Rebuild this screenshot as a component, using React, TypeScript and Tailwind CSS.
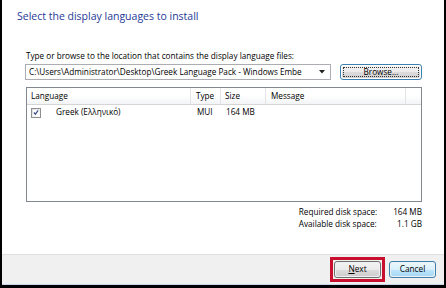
import React from "react";

function Win7Button({ children, blue }: { children: React.ReactNode; blue?: boolean }) {
  return (
    <div
      className={
        "w-[47px] h-[17px] rounded-[3px] border p-px " +
        (blue ? "border-[#3c7fb1]" : "border-[#707070]")
      }
    >
      <div
        className={
          "h-full w-full rounded-[2px] flex items-center justify-center text-[8.3px] leading-none text-black " +
          (blue
            ? "bg-[linear-gradient(to_bottom,#eaf6fd_0%,#d9f0fc_50%,#bee6fd_50%,#a7d9f5_100%)]"
            : "bg-[linear-gradient(to_bottom,#f2f2f2_0%,#ebebeb_50%,#dddddd_50%,#cfcfcf_100%)]")
        }
      >
        {children}
      </div>
    </div>
  );
}

export default function App() {
  return (
    <div className="w-[446px] h-[288px] flex flex-col bg-white border-l-2 border-r-2 border-black font-['Open_Sans','Noto_Sans',sans-serif] text-black overflow-hidden">
      <div className="flex-1 flex flex-col">
        <div className="pt-[9px] pl-[15px] h-[24px] text-[10.5px] leading-[15px] text-[#1e3a96]">
          Select the display languages to install
        </div>
        <div className="pl-[23px] pr-[22px] flex flex-col">
          <div className="mt-[26px] ml-px h-[12px] text-[8.2px] leading-[12px]">
            Type or browse to the location that contains the display language files:
          </div>
          <div className="mt-[2px] flex gap-[9px] h-[16px]">
            <div className="w-[306px] h-full border border-[#abadb3] bg-white flex items-center pl-[3px] pr-[5px]">
              <span className="flex-1 text-[8.2px] leading-none whitespace-nowrap">
                C:\Users\Administrator\Desktop\Greek Language Pack - Windows Embe
              </span>
              <svg width="6" height="4" viewBox="0 0 6 4" className="ml-[4px] shrink-0">
                <path d="M0 0 H6 L3 3.5 Z" fill="#222" />
              </svg>
            </div>
            <div className="flex-1 h-full rounded-[3px] border border-[#3c7fb1] p-px">
              <div className="h-full w-full rounded-[2px] bg-[linear-gradient(to_bottom,#f2f2f2_0%,#ebebeb_50%,#dddddd_50%,#cfcfcf_100%)] p-[1px]">
                <div className="h-full w-full border border-dotted border-[#333] flex items-center justify-center text-[8.2px] leading-none">
                  Browse...
                </div>
              </div>
            </div>
          </div>
          <div className="mt-[7px] ml-px h-[115px] border border-[#828790] bg-white flex flex-col">
            <div className="h-[17px] flex text-[8.2px] leading-none bg-[linear-gradient(to_bottom,#ffffff_0%,#ffffff_45%,#f3f4f6_100%)] border-b border-[#d5d5d5]">
              <div className="w-[164px] pl-[4px] flex items-center border-r border-[#e3e4e6]">Language</div>
              <div className="w-[30px] pl-[5px] flex items-center border-r border-[#e3e4e6]">Type</div>
              <div className="w-[45px] pl-[4px] flex items-center border-r border-[#e3e4e6]">Size</div>
              <div className="w-[140px] pl-[5px] flex items-center border-r border-[#e3e4e6]">Message</div>
              <div className="flex-1"></div>
            </div>
            <div className="h-[15px] flex items-center text-[8.2px] leading-none">
              <div className="w-[164px] pl-[4px] flex items-center">
                <div className="w-[10px] h-[10px] border border-[#8f8f8f] bg-[linear-gradient(135deg,#dcdcdc,#ffffff)] p-px">
                  <div className="w-full h-full bg-white flex items-center justify-center">
                    <svg width="7" height="7" viewBox="0 0 7 7">
                      <path d="M1 3.5 L2.8 5.5 L6 1" stroke="#3b4f86" strokeWidth="1.4" fill="none" />
                    </svg>
                  </div>
                </div>
                <span className="ml-[15px]">Greek (Ελληνικό)</span>
              </div>
              <div className="w-[30px] pl-[6px]">MUI</div>
              <div className="w-[45px] pl-[5px]">164 MB</div>
            </div>
          </div>
          <div className="mt-[4px] self-end grid grid-cols-[auto_auto] gap-x-[16px] text-[8.2px] leading-[12px]">
            <span>Required disk space:</span>
            <span className="text-right">164 MB</span>
            <span>Available disk space:</span>
            <span className="text-right">1.1 GB</span>
          </div>
        </div>
      </div>
      <div className="h-[30px] bg-[#f0f0f0] border-t border-[#dfdfdf] flex items-center justify-end gap-[4px] pr-[8px]">
        <div className="border-[3px] border-[#c8102e] p-px">
          <Win7Button>
            <span>
              <span className="underline">N</span>ext
            </span>
          </Win7Button>
        </div>
        <Win7Button blue>Cancel</Win7Button>
      </div>
      <div className="h-px bg-[#c5d6ea]"></div>
      <div className="h-[3px] bg-black"></div>
    </div>
  );
}
